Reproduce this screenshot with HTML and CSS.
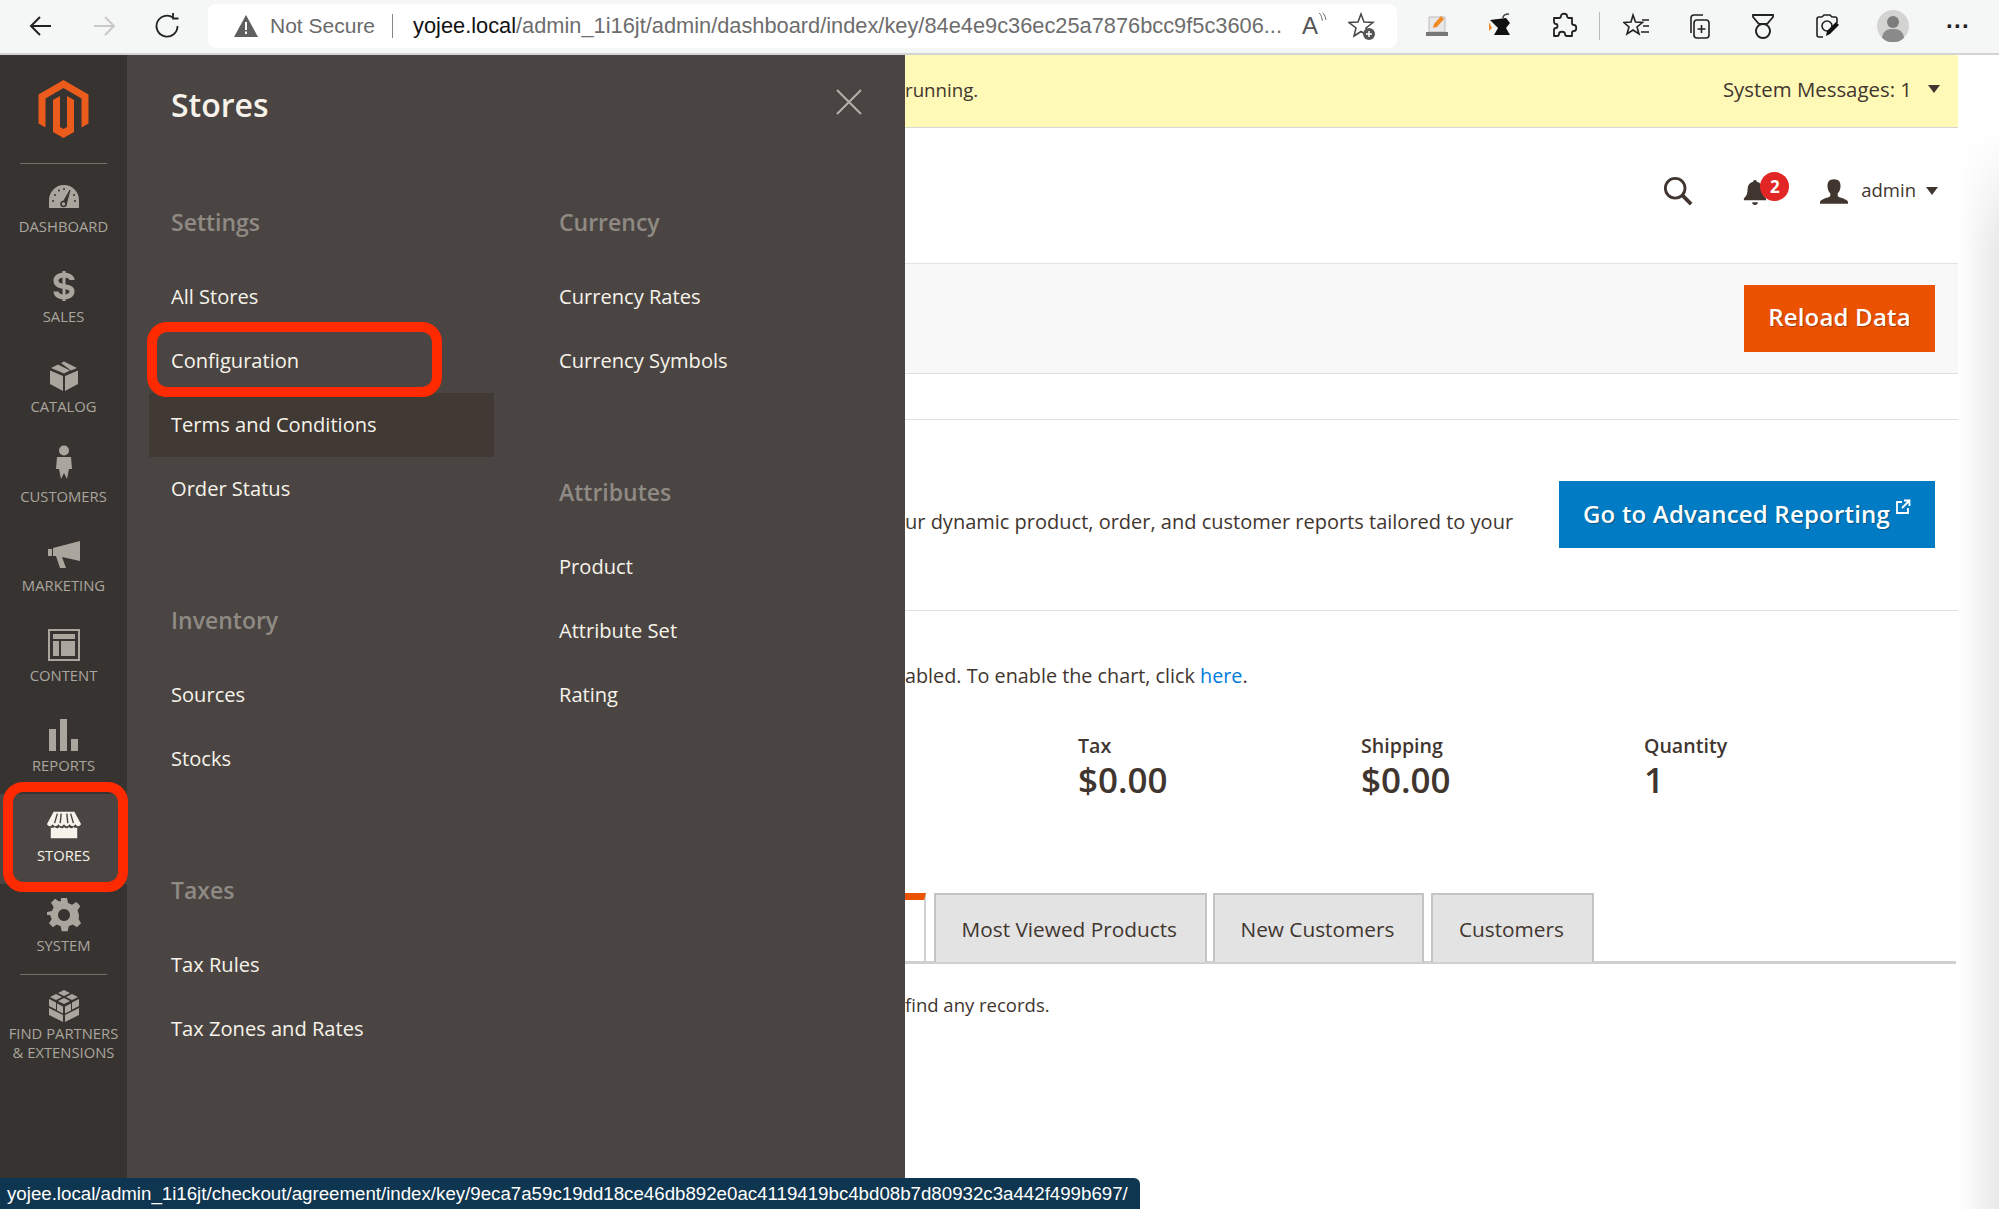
FILE: index.html
```html
<!DOCTYPE html>
<html lang="en">
<head>
<meta charset="utf-8">
<title>Dashboard / Magento Admin</title>
<link rel="stylesheet" href="styles.css">
</head>
<body>
<div class="window">
  <header class="chrome">
    <div class="nav-btns">
      <svg class="ci" viewBox="0 0 28 28"><path d="M24 14H5M13 5l-9 9 9 9" fill="none" stroke="#222" stroke-width="2"/></svg>
      <svg class="ci" viewBox="0 0 28 28"><path d="M4 14h19M15 5l9 9-9 9" fill="none" stroke="#c9c9c9" stroke-width="2"/></svg>
      <svg class="ci" viewBox="0 0 28 28"><path d="M20 5.500A10.500 10.500 0 1 0 24.500 14M20 1v5.500h5.500" fill="none" stroke="#222" stroke-width="1.800"/></svg>
    </div>
    <div class="address">
      <svg class="warn" viewBox="0 0 24 22"><path d="M12 0 24 22H0Z" fill="#5f5f5f"/><path d="M11 7h2v8h-2zM11 16.500h2v2.500h-2z" fill="#fff"/></svg>
      <span class="not-secure">Not Secure</span>
      <span class="addr-sep"></span>
      <span class="url"><b>yojee.local</b>/admin_1i16jt/admin/dashboard/index/key/84e4e9c36ec25a7876bcc9f5c3606...</span>
      <span class="read">A<svg viewBox="0 0 10 16"><path d="M1 1c3 2 3 6 4 9M5 1c3 2 3 5 4 8" fill="none" stroke="#555" stroke-width="1"/></svg></span>
      <svg class="ci-s" viewBox="0 0 28 28"><path d="M13 2l3 8 9 .5-7 5.500 2 8-7-4.500-7 4.500 2-8-7-5.500 9-.5z" fill="none" stroke="#444" stroke-width="1.500"/><circle cx="21" cy="22" r="6" fill="#555"/><path d="M21 19v6M18 22h6" stroke="#fff" stroke-width="1.500"/></svg>
    </div>
    <div class="tools">
      <svg class="ci t1" viewBox="0 0 28 28"><path d="M6 5h16v15H6z" fill="#e8e8e8" stroke="#bbb"/><path d="M3 20h22v4H3z" fill="#777"/><path d="M10 16l1-4 7-8 3 3-7 8z" fill="#f08a24"/></svg>
      <svg class="ci t2" viewBox="0 0 28 28"><path d="M4 8l16-2 4 5-4 5 4 7H8l4-7z" fill="#111"/><path d="M3 10l3 6-3 3z" fill="#f08a24"/><path d="M17 6c0-3 3-4 6-4" fill="none" stroke="#444" stroke-width="1.500"/></svg>
      <svg class="ci t3" viewBox="0 0 28 28"><path d="M11 4c0-3 6-3 6 0 0 1 1 2 2 2h3v5c0 1 1 2 2 2 3 0 3 6 0 6-1 0-2 1-2 2v3h-5c-1 0-2-1-2-2 0-3-6-3-6 0 0 1-1 2-2 2H4v-6c0-1 1-2 2-2 2 0 2-4 0-4-1 0-2-1-2-2V6h5c1 0 2-1 2-2z" fill="none" stroke="#222" stroke-width="1.800" stroke-linejoin="round"/></svg>
      <span class="tool-sep"></span>
      <svg class="ci t4" viewBox="0 0 28 28"><path d="M10 3l2.500 7 7 .5-5.500 4.500 2 7-6-4-6 4 2-7-5-4.500 7-.5zM19 8h7M20 14h6M18 20h8" fill="none" stroke="#222" stroke-width="1.600"/></svg>
      <svg class="ci t5" viewBox="0 0 28 28"><rect x="9" y="8" width="15" height="18" rx="3" fill="none" stroke="#222" stroke-width="1.600"/><path d="M16.500 13v8M12.500 17h8M6 21V6a3 3 0 0 1 3-3h9" fill="none" stroke="#222" stroke-width="1.600"/></svg>
      <svg class="ci t6" viewBox="0 0 28 28"><path d="M4 3h20v2l-6 7H10L4 5zM14 12a7 7 0 1 1-.01 0z" fill="none" stroke="#222" stroke-width="1.800"/></svg>
      <svg class="ci t7" viewBox="0 0 28 28"><path d="M9 5l2-2h6l2 2h3a2 2 0 0 1 2 2v4M10 25H6a2 2 0 0 1-2-2V7a2 2 0 0 1 2-2h3" fill="none" stroke="#222" stroke-width="1.600"/><circle cx="14" cy="14" r="5" fill="none" stroke="#222" stroke-width="1.600"/><path d="M13 24l1-5 9-9 3 3-9 9z" fill="#111"/></svg>
      <svg class="avatar" viewBox="0 0 32 32"><circle cx="16" cy="16" r="16" fill="#d3d3d1"/><circle cx="16" cy="12" r="6" fill="#7c7c7c"/><path d="M5 28c1-8 6-9 11-9s10 1 11 9a16 16 0 0 1-22 0z" fill="#8a8a8a"/></svg>
      <span class="dots">&middot;&middot;&middot;</span>
    </div>
  </header>

  <div class="app">
    <nav class="rail">
      <div class="logo-box">
        <svg class="logo" viewBox="0 0 50 58"><path fill="#eb5b1c" d="M25 0 50 14.500V43.500L43 47.500V18.500L25 8 7 18.500V47.500L0 43.500V14.500Z"/><path fill="#eb5b1c" d="M25 58 14.500 52V20l7-4V47l3.500 2 3.500-2V16l7 4V52Z"/></svg>
      </div>
      <a class="rail-item">
        <svg class="ri" viewBox="0 0 34 26"><path fill="#aaa69e" d="M2 25V17a15 15 0 0 1 30 0v8Z"/><path d="M15 21 23 7 19 22Z" fill="#373330" stroke="#373330"/><circle cx="16.500" cy="21" r="2.500" fill="#aaa69e" stroke="#373330" stroke-width="1.500"/><path d="M6 18v.1M8 12v.1M12 7.500v.1M17 6v.1M27 12v.1M28 18v.1" stroke="#373330" stroke-width="2" stroke-linecap="round"/></svg>
        <span>Dashboard</span>
      </a>
      <a class="rail-item">
        <svg class="ri" viewBox="0 0 34 32"><path d="M17 1v30" stroke="#aaa69e" stroke-width="3"/><path d="M25 10c0-3-4-5-8-5s-8 2-8 5.500c0 9 16 3.500 16 11 0 3.500-4 5.500-8 5.500s-8-2-8-5.500" fill="none" stroke="#aaa69e" stroke-width="5"/></svg>
        <span>Sales</span>
      </a>
      <a class="rail-item">
        <svg class="ri" viewBox="0 0 34 30"><path fill="#aaa69e" d="M4 7 11 3.500 23 9.500 17 12.500ZM14 2 17 .5 30 7 24 9.500ZM3 9.500 16 15V30L3 23ZM31 9.500V23L18 30V15Z"/></svg>
        <span>Catalog</span>
      </a>
      <a class="rail-item">
        <svg class="ri ri-person" viewBox="0 0 34 34"><circle cx="17" cy="5.500" r="5" fill="#aaa69e"/><path fill="#aaa69e" d="M10 12h14l1 12h-3l-2 10-3-6-3 6-2-10H9z"/></svg>
        <span>Customers</span>
      </a>
      <a class="rail-item">
        <svg class="ri" viewBox="0 0 34 28"><path fill="#aaa69e" d="M1 8h4v7H1zM6 7 33 0V20L15 16l4 11h-6L9 15H6z"/></svg>
        <span>Marketing</span>
      </a>
      <a class="rail-item">
        <svg class="ri" viewBox="0 0 34 34"><path fill="none" stroke="#aaa69e" stroke-width="2" d="M2 2h30v30H2z"/><path fill="#aaa69e" d="M6 6h22v5H6zM6 13h6v15H6zM14 13h14v15H14z"/></svg>
        <span>Content</span>
      </a>
      <a class="rail-item">
        <svg class="ri" viewBox="0 0 34 32"><path fill="#aaa69e" d="M2 10h7v22H2zM13 0h7v32h-7zM24 20h7v12h-7z"/></svg>
        <span>Reports</span>
      </a>
      <a class="rail-item active">
        <svg class="ri" viewBox="0 0 36 28"><path fill="#f7f3eb" d="M7 0h22l7 13c-1 3-5 3-6 0-1 3-5 3-6 0-1 3-5 3-6 0-1 3-5 3-6 0-1 3-5 3-6 0-1 3-5 3-6 0Z"/><path d="M11 2 8 12M15 2l-1 10M21 2l1 10M25 2l3 10" stroke="#4a4542" stroke-width="1.500"/><path fill="#f7f3eb" d="M4 17c2 0 3 0 4-1 2 2 4 2 5 0 2 2 4 2 5 0 2 2 4 2 5 0 2 2 4 2 5 0 1 1 2 1 4 1v11H4z"/></svg>
        <span>Stores</span>
        <i class="callout"></i>
      </a>
      <a class="rail-item">
        <svg class="ri" viewBox="0 0 34 34"><path fill="#aaa69e" fill-rule="evenodd" d="M14 0h6l1 5 4 1.700 4.300-2.700 4 4-2.700 4.300L32 17l2 .0v0l-2 0-.4 4 2.400 4.300-4 4-4.300-2.700-4 1.700-1 5h-6l-1-5-4-1.700L6 29.300l-4-4 2.700-4.300L3 17H0v-3l5-1 1.700-4L4 4.700l4-4L12.300 3.400 14 2.700ZM17 11a6 6 0 1 0 .01 0Z"/></svg>
        <span>System</span>
      </a>
      <div class="rail-sep"></div>
      <a class="rail-item partners">
        <svg class="ri" viewBox="0 0 34 32"><path fill="#aaa69e" d="M17 0l6 3-6 3-6-3zM9 4l6 3-6 3-6-3zM25 4l6 3-6 3-6-3zM17 8l6 3-6 3-6-3zM2 9l7 3.500v7L2 16zM10 13.500l6 3v7l-6-3zM18 16.500l6-3v7l-6 3zM25 12.500l7-3.500v7l-7 3.500zM2 18l14 7v7L2 25zM32 18v7l-14 7v-7z"/></svg>
        <span>Find Partners<br>&amp; Extensions</span>
      </a>
    </nav>

    <aside class="panel">
      <div class="panel-head">
        <h2>Stores</h2>
        <svg class="close" viewBox="0 0 26 26"><path d="M1 1l24 24M25 1 1 25" stroke="#b5b1aa" stroke-width="2" fill="none"/></svg>
      </div>
      <div class="panel-cols">
        <div class="col">
          <section>
            <h3>Settings</h3>
            <a class="link">All Stores</a>
            <a class="link boxed">Configuration<i class="callout-link"></i></a>
            <a class="link hover">Terms and Conditions</a>
            <a class="link">Order Status</a>
          </section>
          <section>
            <h3>Inventory</h3>
            <a class="link">Sources</a>
            <a class="link">Stocks</a>
          </section>
          <section>
            <h3>Taxes</h3>
            <a class="link">Tax Rules</a>
            <a class="link">Tax Zones and Rates</a>
          </section>
        </div>
        <div class="col">
          <section>
            <h3>Currency</h3>
            <a class="link">Currency Rates</a>
            <a class="link">Currency Symbols</a>
          </section>
          <section>
            <h3>Attributes</h3>
            <a class="link">Product</a>
            <a class="link">Attribute Set</a>
            <a class="link">Rating</a>
          </section>
        </div>
      </div>
    </aside>

    <main class="main">
      <div class="notice">
        <span class="notice-text">running.</span>
        <span class="sys">System Messages: 1<i class="caret dark"></i></span>
      </div>
      <div class="topbar">
        <svg class="search" viewBox="0 0 32 32"><circle cx="13" cy="13" r="10.500" fill="none" stroke="#41362f" stroke-width="3"/><path d="M21 21l9 9" stroke="#41362f" stroke-width="4"/></svg>
        <div class="bell">
          <svg viewBox="0 0 24 28"><path fill="#41362f" d="M12 1c1.500 0 2 1 2 2 4 1 6 4 6 8 0 6 2 8 4 10v2H0v-2c2-2 4-4 4-10 0-4 2-7 6-8 0-1 .5-2 2-2zM9 25h6c0 2-1 3-3 3s-3-1-3-3z"/></svg>
          <b class="badge">2</b>
        </div>
        <div class="user">
          <svg viewBox="0 0 30 26"><path fill="#41362f" d="M15 0c5 0 7 3 7 7 0 3-1 6-3 8v3c2 2 9 2 11 6v2H0v-2c2-4 9-4 11-6v-3c-2-2-3-5-3-8 0-4 2-7 7-7z"/></svg>
          <span class="user-name">admin</span>
          <i class="caret"></i>
        </div>
      </div>
      <div class="band">
        <a class="btn orange">Reload Data</a>
      </div>
      <div class="report">
        <p>ur dynamic product, order, and customer reports tailored to your</p>
        <a class="btn blue">Go to Advanced Reporting<svg viewBox="0 0 16 16"><path d="M7 3H2v11h11V9M9 1.500h5.500V7M14 2 7 9" fill="none" stroke="#fff" stroke-width="1.800"/></svg></a>
      </div>
      <p class="chart-note">abled. To enable the chart, click <a class="here">here</a>.</p>
      <div class="totals">
        <div class="total"><span>Tax</span><strong>$0.00</strong></div>
        <div class="total"><span>Shipping</span><strong>$0.00</strong></div>
        <div class="total"><span>Quantity</span><strong>1</strong></div>
      </div>
      <div class="tabs">
        <span class="tab-active"></span>
        <a class="tab">Most Viewed Products</a>
        <a class="tab">New Customers</a>
        <a class="tab">Customers</a>
      </div>
      <p class="empty">find any records.</p>
    </main>
  </div>

  <div class="edge-shadow"></div>
  <div class="status">yojee.local/admin_1i16jt/checkout/agreement/index/key/9eca7a59c19dd18ce46db892e0ac4119419bc4bd08b7d80932c3a442f499b697/</div>
</div>
</body>
</html>
```

FILE: styles.css
```css
* { box-sizing: border-box; }
html, body { margin: 0; height: 100%; background: #fff; }
body { font-family: "Open Sans", sans-serif; color: #41362f; overflow: hidden; }
h2, h3, p { margin: 0; }
a { display: block; text-decoration: none; }

.window { position: relative; height: 1209px; display: flex; flex-direction: column; overflow: hidden; }

/* Browser chrome */
.chrome { height: 55px; flex: none; display: flex; align-items: center; background: #f5f6f6; border-bottom: 2px solid #d4d4d4; padding-bottom: 2px; font-family: "Liberation Sans", sans-serif; }
.nav-btns { width: 208px; flex: none; display: flex; padding-left: 27px; gap: 35px; }
.ci { width: 28px; height: 28px; flex: none; display: block; }
.ci-s { width: 28px; height: 28px; flex: none; margin-left: 21px; }
.address { width: 1189px; height: 44px; flex: none; background: #fff; border-radius: 8px; display: flex; align-items: center; padding-left: 26px; font-size: 21px; color: #6d6d6d; }
.warn { width: 24px; height: 22px; flex: none; }
.not-secure { margin-left: 12px; color: #6a6a6a; white-space: nowrap; }
.addr-sep { width: 1px; height: 24px; background: #888; margin: 0 20px 0 17px; flex: none; }
.url { white-space: nowrap; font-size: 21.800px; }
.url b { font-weight: 400; color: #111; }
.read { margin-left: 20px; font-size: 24px; display: flex; color: #555; }
.read svg { width: 9px; height: 14px; }
.tools { flex: 1; display: flex; align-items: center; padding-left: 26px; }
.t2 { margin-left: 35px; }
.t3 { margin-left: 36px; }
.tool-sep { width: 1px; height: 28px; background: #bbb; margin: 0 23px 0 21px; flex: none; }
.t5 { margin-left: 34px; }
.t6 { margin-left: 36px; }
.t7 { margin-left: 36px; }
.avatar { width: 32px; height: 32px; margin-left: 36px; flex: none; }
.dots { margin-left: 37px; font-size: 24px; font-weight: 700; color: #222; line-height: 1; letter-spacing: 0; }

/* App frame */
.app { flex: 1; display: flex; min-height: 0; }

.rail { width: 127px; flex: none; background: #373330; display: flex; flex-direction: column; }
.logo-box { height: 110px; flex: none; display: flex; justify-content: center; padding-top: 25px; border-bottom: 1px solid transparent; position: relative; }
.logo-box::after { content: ""; position: absolute; left: 20px; right: 20px; bottom: 0; height: 1px; background: #736e68; }
.logo { width: 51px; height: 58px; }
.rail-item { position: relative; height: 89.900px; flex: none; display: flex; flex-direction: column; align-items: center; justify-content: flex-end; padding-bottom: 19px; gap: 4px; color: #aaa69e; font-size: 14.800px; text-transform: uppercase; line-height: 19px; text-align: center; }
.ri { width: 34px; height: 34px; flex: none; }
.ri-person { margin-bottom: 4px; }
.rail-item.active { background: #4a4542; color: #f7f3eb; }
.callout { position: absolute; left: 3px; right: -1px; top: -12px; bottom: -8px; border: 10px solid #ff2a00; border-radius: 20px; }
.rail-sep { height: 1px; background: #736e68; margin: 0 20px; flex: none; }
.partners { height: 100px; justify-content: flex-start; padding-top: 14px; padding-bottom: 0; gap: 1px; }

/* Slide-out panel */
.panel { width: 778px; flex: none; background: #4a4542; color: #f7f3eb; padding: 0 22px; }
.panel-head { height: 147px; display: flex; align-items: flex-start; justify-content: space-between; padding: 28px 20px 0 22px; }
.panel-head h2 { font-size: 32px; font-weight: 600; line-height: 44px; color: #f7f3eb; }
.close { width: 26px; height: 26px; flex: none; margin: 6px 1px 0 0; }
.panel-cols { display: flex; gap: 43px; }
.col { width: 345px; flex: none; display: flex; flex-direction: column; gap: 79px; }
.col h3 { height: 40px; line-height: 40px; font-size: 23px; font-weight: 600; color: #8f8a83; margin-bottom: 23px; padding-left: 22px; }
.link { position: relative; height: 64px; line-height: 64px; padding-left: 22px; font-size: 20.100px; color: #f7f3eb; }
.link.hover { background: #403934; }
.link.boxed { z-index: 1; }
.callout-link { position: absolute; left: -2px; right: 52px; top: -7px; bottom: -4px; border: 10px solid #ff2a00; border-radius: 20px; }

/* Page behind the panel */
.main { flex: 1; min-width: 0; margin-right: 41px; font-size: 20px; color: #41362f; }
.notice { height: 73px; background: #fff9b8; border-bottom: 1px solid #d6d6d6; display: flex; align-items: center; justify-content: space-between; padding: 0 18px 4px 0; font-size: 20.400px; }
.notice-text { font-size: 18.700px; }
.sys { display: flex; align-items: center; }
.caret { display: block; width: 0; height: 0; border: 6px solid transparent; border-top: 8px solid #41362f; border-bottom: 0; }
.caret.dark { margin-left: 16px; }
.topbar { height: 135px; display: flex; align-items: center; padding: 0 20px 9px 0; justify-content: flex-end; }
.search { width: 30px; height: 30px; flex: none; }
.bell { position: relative; width: 27px; height: 25px; margin-left: 50px; }
.bell svg { width: 24px; height: 26px; display: block; }
.badge { position: absolute; left: 17px; top: -7px; width: 29px; height: 29px; border-radius: 50%; background: #e22626; color: #fff; font-size: 17px; line-height: 29px; text-align: center; }
.user { display: flex; align-items: center; margin-left: 50px; font-size: 18.500px; }
.user svg { width: 28px; height: 25px; flex: none; margin-right: 13px; }
.user-name { margin-top: -3px; }
.user .caret { margin-left: 10px; }
.band { height: 111px; background: #f8f8f8; border-top: 1px solid #e4e4e4; border-bottom: 1px solid #e0e0e0; display: flex; align-items: center; justify-content: flex-end; padding: 0 23px 1px 0; }
.btn { display: flex; align-items: center; justify-content: center; height: 67px; padding-bottom: 3px; color: #fff; font-size: 24px; font-weight: 600; letter-spacing: .2px; text-shadow: 1px 1px 1px rgba(0,0,0,.3); }
.orange { width: 191px; background: #eb5202; }
.blue { width: 376px; background: #007bc4; }
.blue svg { width: 16px; height: 16px; margin: -12px 0 0 5px; }
.report { margin-top: 45px; height: 192px; border-top: 1px solid #e0e0e0; border-bottom: 1px solid #e0e0e0; display: flex; justify-content: space-between; padding: 61px 23px 0 0; }
.report p { margin-top: 27px; }
.chart-note { margin-top: 50px; line-height: 30px; font-size: 19.800px; }
.here { display: inline; color: #007bdb; }
.totals { display: flex; padding-left: 173px; margin-top: 42px; }
.total { width: 283px; display: flex; flex-direction: column; }
.total span { font-size: 19.600px; font-weight: 600; line-height: 26px; }
.total strong { font-size: 35px; font-weight: 600; line-height: 41px; }
.tabs { display: flex; margin: 93px 2px 0 0; height: 71px; border-bottom: 3px solid #d0d0d0; }
.tab-active { width: 21px; height: 69px; border-right: 2px solid #cfcfcf; border-top: 7px solid #eb5202; }
.tab { height: 69px; line-height: 68px; padding: 0 28px 0 25.500px; background: #e3e3e3; border: 2px solid #c4c4c4; border-bottom: 0; font-size: 20.800px; margin-left: 6px; }
.tab:last-child { margin-left: 7px; }
.tab-active + .tab { margin-left: 8px; }
.empty { margin-top: 28px; font-size: 18.500px; }

/* Overlays */
.edge-shadow { position: absolute; right: 0; top: 130px; bottom: 0; width: 41px; background: linear-gradient(90deg, rgba(0,0,0,0), rgba(0,0,0,.09)); -webkit-mask-image: linear-gradient(180deg, transparent, #000 120px); mask-image: linear-gradient(180deg, transparent, #000 120px); pointer-events: none; }
.status { position: absolute; left: 0; bottom: 0; height: 31px; width: 1140px; background: #0f3650; color: #fff; border-radius: 0 6px 0 0; font-family: "Liberation Sans", sans-serif; font-size: 18.700px; line-height: 31px; padding-left: 7px; white-space: nowrap; }
```
